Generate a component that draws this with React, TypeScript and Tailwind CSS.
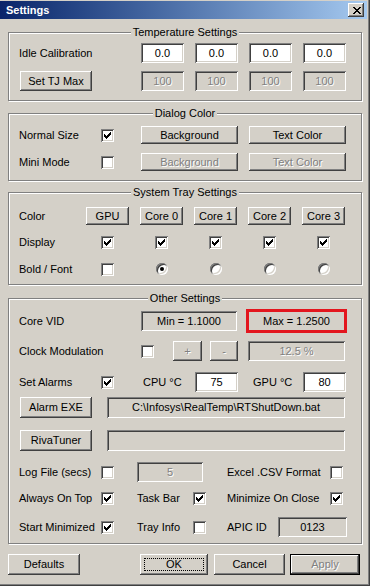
import React from 'react';

const RAISED =
  'shadow-[inset_-1px_-1px_0_#404040,inset_1px_1px_0_#fff,inset_-2px_-2px_0_#808080,inset_2px_2px_0_#d4d0c8]';
const SUNKEN =
  'shadow-[inset_1px_1px_0_#808080,inset_-1px_-1px_0_#fff,inset_2px_2px_0_#404040,inset_-2px_-2px_0_#d4d0c8]';
const GRAY = 'text-[#808080] [text-shadow:1px_1px_0_#fff]';

const CHECK = ['......#', '.....##', '#...###', '##.###.', '#####..', '.###...', '..#....'];
const CROSS = ['##....##', '.##..##.', '..####..', '...##...', '..####..', '.##..##.', '##....##'];

const Pixels: React.FC<{ rows: string[] }> = ({ rows }) => (
  <svg width={rows[0].length} height={rows.length} shapeRendering="crispEdges">
    {rows.map((r, y) =>
      r.split('').map((c, x) => (c === '#' ? <rect key={`${x}-${y}`} x={x} y={y} width={1} height={1} fill="#000" /> : null))
    )}
  </svg>
);

const Btn: React.FC<{ label: string; className: string; disabled?: boolean }> = ({ label, className, disabled }) => (
  <div className={`${RAISED} bg-[#d4d0c8] flex items-center justify-center shrink-0 ${disabled ? GRAY : ''} ${className}`}>
    {label}
  </div>
);

const Field: React.FC<{ text?: string; className: string; white?: boolean; disabled?: boolean }> = ({
  text,
  className,
  white,
  disabled,
}) => (
  <div
    className={`${SUNKEN} ${white ? 'bg-white' : 'bg-[#d4d0c8]'} flex items-center justify-center shrink-0 ${
      disabled ? GRAY : ''
    } ${className}`}
  >
    {text}
  </div>
);

const Check: React.FC<{ on?: boolean; className?: string }> = ({ on, className = '' }) => (
  <div className={`w-[13px] h-[13px] bg-white ${SUNKEN} flex items-center justify-center shrink-0 ${className}`}>
    {on && <Pixels rows={CHECK} />}
  </div>
);

const Radio: React.FC<{ on?: boolean }> = ({ on }) => (
  <div className={`w-[12px] h-[12px] rounded-full bg-white ${SUNKEN} flex items-center justify-center`}>
    {on && <div className="w-[4px] h-[4px] rounded-full bg-black" />}
  </div>
);

const Group: React.FC<{ title: string; className: string; children: React.ReactNode }> = ({ title, className, children }) => (
  <div className={`ml-[8px] w-[354px] border border-[#808080] shadow-[1px_1px_0_#fff,inset_1px_1px_0_#fff] ${className}`}>
    <div className="-mt-[7px] mx-auto w-fit px-[2px] bg-[#d4d0c8] leading-[13px]">{title}</div>
    {children}
  </div>
);

const Label: React.FC<{ text: string; className: string }> = ({ text, className }) => (
  <div className={`shrink-0 whitespace-nowrap ${className}`}>{text}</div>
);

const App: React.FC = () => {
  const cores = ['GPU', 'Core 0', 'Core 1', 'Core 2', 'Core 3'];

  return (
    <div className="w-[370px] h-[586px] bg-[#d4d0c8] text-black text-[11px] leading-[13px] font-['Liberation_Sans',Arial,sans-serif] flex flex-col pt-px overflow-hidden shadow-[inset_-1px_-1px_0_#404040,inset_-2px_-2px_0_#808080]">
      {/* Title bar */}
      <div className="w-[367px] h-[18px] bg-linear-to-r from-[#0a246a] to-[#a6caf0] flex items-center justify-between pl-[6px] pr-[3px] shrink-0">
        <span className="text-white font-bold">Settings</span>
        <div className={`${RAISED} bg-[#d4d0c8] w-[16px] h-[14px] flex items-center justify-center pl-px`}>
          <Pixels rows={CROSS} />
        </div>
      </div>

      {/* Temperature Settings */}
      <Group title="Temperature Settings" className="mt-[13px] pb-[9px]">
        <div className="flex items-center h-[20px] mt-[4px] pl-[10px]">
          <Label text="Idle Calibration" className="w-[122px]" />
          <div className="grid grid-cols-[repeat(4,43px)] gap-x-[11px]">
            {[0, 1, 2, 3].map(i => (
              <Field key={i} text="0.0" white className="h-[20px]" />
            ))}
          </div>
        </div>
        <div className="flex items-center h-[20px] mt-[8px] pl-[11px]">
          <Btn label="Set TJ Max" className="w-[72px] h-[20px]" />
          <div className="ml-[49px] grid grid-cols-[repeat(4,43px)] gap-x-[11px]">
            {[0, 1, 2, 3].map(i => (
              <Field key={i} text="100" disabled className="h-[20px]" />
            ))}
          </div>
        </div>
      </Group>

      {/* Dialog Color */}
      <Group title="Dialog Color" className="mt-[12px] pb-[9px]">
        <div className="flex items-center h-[18px] mt-[6px] pl-[10px]">
          <Label text="Normal Size" className="w-[82px]" />
          <Check on />
          <Btn label="Background" className="ml-[27px] w-[97px] h-[18px]" />
          <Btn label="Text Color" className="ml-[11px] w-[97px] h-[18px]" />
        </div>
        <div className="flex items-center h-[18px] mt-[9px] pl-[10px]">
          <Label text="Mini Mode" className="w-[82px]" />
          <Check />
          <Btn label="Background" disabled className="ml-[27px] w-[97px] h-[18px]" />
          <Btn label="Text Color" disabled className="ml-[11px] w-[97px] h-[18px]" />
        </div>
      </Group>

      {/* System Tray Settings */}
      <Group title="System Tray Settings" className="mt-[11px] pb-[6px]">
        <div className="flex items-center h-[18px] mt-[8px] pl-[10px]">
          <Label text="Color" className="w-[67px]" />
          <div className="grid grid-cols-[repeat(5,43px)] gap-x-[11px]">
            {cores.map(c => (
              <Btn key={c} label={c} className="h-[18px]" />
            ))}
          </div>
        </div>
        <div className="flex items-center h-[18px] mt-[8px] pl-[10px]">
          <Label text="Display" className="w-[67px]" />
          <div className="grid grid-cols-[repeat(5,43px)] gap-x-[11px]">
            {cores.map(c => (
              <div key={c} className="flex justify-center">
                <Check on />
              </div>
            ))}
          </div>
        </div>
        <div className="flex items-center h-[18px] mt-[9px] pl-[10px]">
          <Label text="Bold / Font" className="w-[67px]" />
          <div className="grid grid-cols-[repeat(5,43px)] gap-x-[11px]">
            <div className="flex justify-center">
              <Check />
            </div>
            {[true, false, false, false].map((on, i) => (
              <div key={i} className="flex justify-center">
                <Radio on={on} />
              </div>
            ))}
          </div>
        </div>
      </Group>

      {/* Other Settings */}
      <Group title="Other Settings" className="mt-[13px] pb-[6px]">
        <div className="flex items-center h-[20px] mt-[6px] pl-[10px]">
          <Label text="Core VID" className="w-[122px]" />
          <Field text="Min = 1.1000" className="w-[96px] h-[20px]" />
          <div className="ml-[9px] w-[101px] h-[24px] border-[3px] border-[#e3161e] flex items-center justify-center shrink-0">
            Max = 1.2500
          </div>
        </div>
        <div className="flex items-center h-[20px] mt-[10px] pl-[10px]">
          <Label text="Clock Modulation" className="w-[122px]" />
          <Check />
          <Btn label="+" disabled className="ml-[19px] w-[29px] h-[20px]" />
          <Btn label="-" disabled className="ml-[8px] w-[28px] h-[20px]" />
          <Field text="12.5 %" disabled className="ml-[10px] w-[97px] h-[20px]" />
        </div>
        <div className="flex items-center h-[20px] mt-[11px] pl-[10px]">
          <Label text="Set Alarms" className="w-[82px]" />
          <Check on />
          <Label text="CPU °C" className="ml-[29px] w-[52px]" />
          <Field text="75" white className="w-[43px] h-[20px]" />
          <Label text="GPU °C" className="ml-[15px] w-[50px]" />
          <Field text="80" white className="w-[43px] h-[20px]" />
        </div>
        <div className="flex items-center h-[21px] mt-[5px] pl-[11px]">
          <Btn label="Alarm EXE" className="w-[72px] h-[21px]" />
          <Field text="C:\Infosys\RealTemp\RTShutDown.bat" className="ml-[15px] w-[238px] h-[21px]" />
        </div>
        <div className="flex items-center h-[21px] mt-[12px] pl-[11px]">
          <Btn label="RivaTuner" className="w-[72px] h-[21px]" />
          <Field className="ml-[15px] w-[238px] h-[21px]" />
        </div>
        <div className="flex items-center h-[20px] mt-[11px] pl-[10px]">
          <Label text="Log File (secs)" className="w-[82px]" />
          <Check />
          <Field text="5" disabled className="ml-[23px] w-[66px] h-[20px]" />
          <Label text="Excel .CSV Format" className="ml-[24px] w-[103px]" />
          <Check />
        </div>
        <div className="flex items-center h-[20px] mt-[6px] pl-[10px]">
          <Label text="Always On Top" className="w-[82px]" />
          <Check on />
          <Label text="Task Bar" className="ml-[23px] w-[56px]" />
          <Check on />
          <Label text="Minimize On Close" className="ml-[21px] w-[103px]" />
          <Check on />
        </div>
        <div className="flex items-center h-[20px] mt-[9px] pl-[10px]">
          <Label text="Start Minimized" className="w-[82px]" />
          <Check on />
          <Label text="Tray Info" className="ml-[23px] w-[56px]" />
          <Check />
          <Label text="APIC ID" className="ml-[21px] w-[51px]" />
          <Field text="0123" className="w-[69px] h-[20px]" />
        </div>
      </Group>

      {/* Bottom buttons */}
      <div className="flex items-center mt-[10px] pl-[8px]">
        <Btn label="Defaults" className="w-[72px] h-[21px]" />
        <div className={`${RAISED} bg-[#d4d0c8] ml-[60px] w-[68px] h-[21px] p-[4px] shrink-0`}>
          <div className="w-full h-full border border-dotted border-black flex items-center justify-center">OK</div>
        </div>
        <Btn label="Cancel" className="ml-[6px] w-[71px] h-[21px]" />
        <div className="ml-[5px] w-[70px] h-[21px] border border-black shrink-0">
          <Btn label="Apply" disabled className="w-full h-full" />
        </div>
      </div>
    </div>
  );
};

export default App;
